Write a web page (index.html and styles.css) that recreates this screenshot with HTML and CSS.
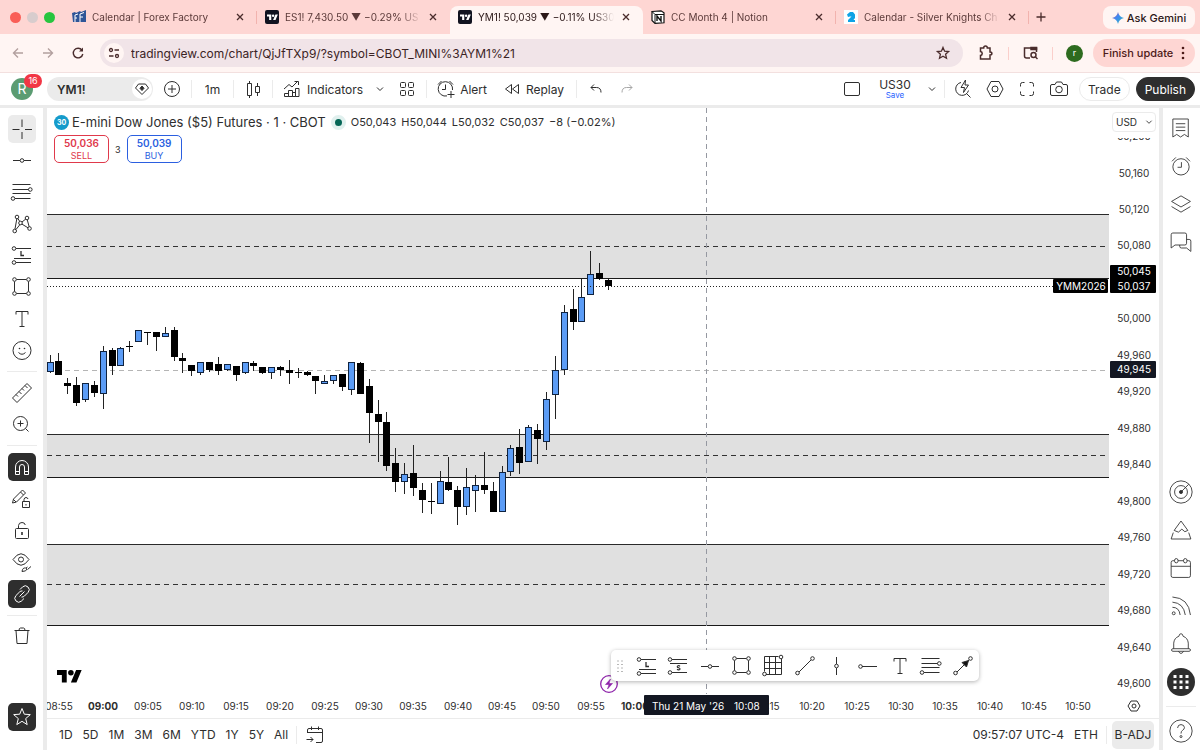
FILE: index.html
```html
<!DOCTYPE html>
<html lang="en">
<head>
    <meta charset="UTF-8">
    <meta name="viewport" content="width=device-width, initial-scale=1.0">
    <title>YM1! 50,039 ▼ −0.11% US30</title>
    <link rel="stylesheet" href="styles.css">
</head>
<body>
    <!-- icons used more than once -->
    <svg class="sprite" aria-hidden="true">
        <symbol id="i-close" viewBox="0 0 16 16"><path d="M5 5l6 6M11 5l-6 6"/></symbol>
        <symbol id="i-down" viewBox="0 0 16 16"><path d="M5 6.500l3 3 3-3"/></symbol>
        <symbol id="i-logo" viewBox="0 0 36 28"><path d="M14 22H7V11H0V4h14v18zM28 22h-8l7.500-18h8L28 22z"/><circle cx="20" cy="8" r="4"/></symbol>
        <symbol id="i-hline" viewBox="0 0 28 28"><path d="M5 14.500h7M16 14.500h7"/><circle cx="14" cy="14.500" r="1.800"/></symbol>
        <symbol id="i-fib" viewBox="0 0 28 28"><path d="M4.500 6.500h18M4.500 11.500h16M4.500 15.500h18M7 20.500h15.500"/><circle cx="22.300" cy="11.500" r="1.800"/><circle cx="5" cy="20.500" r="1.800"/></symbol>
        <symbol id="i-long" viewBox="0 0 28 28"><path d="M8 7.500h15M6 17.500h17M8 21.500h15"/><circle cx="6" cy="7.500" r="1.800"/><circle cx="6" cy="21.500" r="1.800"/><path d="M13 10v4.500h3" stroke-width="1.300"/></symbol>
        <symbol id="i-short" viewBox="0 0 28 28"><path d="M8 7.500h15M6 11.500h17M8 20.500h15"/><circle cx="6" cy="7.500" r="1.800"/><circle cx="6" cy="20.500" r="1.800"/><path d="M16 14.300c-1-1-3-.6-2.600.7.300.9 2.500.7 2.600 1.900 0 1.200-2.200 1.300-2.900.3" stroke-width="1.200"/></symbol>
        <symbol id="i-rect" viewBox="0 0 28 28"><path d="M8.500 6.500h10M8.500 20.500h10M6.500 8.500v10M20.500 8.500v10"/><circle cx="6.500" cy="6.500" r="1.800"/><circle cx="20.500" cy="6.500" r="1.800"/><circle cx="6.500" cy="20.500" r="1.800"/><circle cx="20.500" cy="20.500" r="1.800"/></symbol>
        <symbol id="i-text" viewBox="0 0 28 28"><path d="M8 9.500v-3h12v3M14 6.500v15M11.500 21.500h5"/></symbol>
        <symbol id="i-alarm" viewBox="0 0 28 28"><circle cx="14" cy="15" r="9.500"/><path d="M14.500 9.500v6H10M3.500 8.500L8 4M24.500 8.500L20 4"/></symbol>
    </svg>

    <div class="tab-strip">
        <div class="lights"><i class="red"></i><i class="grey"></i><i class="green"></i></div>
        <div class="tab divided">
            <svg class="favicon" viewBox="0 0 14 14"><path d="M0 3l3-1 1 1 4-2 1 1 5-2v12H1z" fill="#2f5597"/><path d="M3 5l3-1M3 5v7M3 8h2M8 4l4-1.500M8 4v8M8 7h3" stroke="#fff" stroke-width="1" fill="none"/></svg>
            <span class="tab-title">Calendar | Forex Factory</span>
            <button class="tab-close" aria-label="Close tab"><svg><use href="#i-close"/></svg></button>
        </div>
        <div class="tab">
            <span class="favicon tv"><svg><use href="#i-logo"/></svg></span>
            <span class="tab-title">ES1! 7,430.50 ▼ −0.29% US</span>
            <button class="tab-close" aria-label="Close tab"><svg><use href="#i-close"/></svg></button>
        </div>
        <div class="tab active">
            <span class="favicon tv"><svg><use href="#i-logo"/></svg></span>
            <span class="tab-title">YM1! 50,039 ▼ −0.11% US30</span>
            <button class="tab-close" aria-label="Close tab"><svg><use href="#i-close"/></svg></button>
        </div>
        <div class="tab divided">
            <svg class="favicon" viewBox="0 0 14 14"><path d="M1 1.500l9-.7 3 2v10l-9 .6-3-3z" fill="#fff" stroke="#111" stroke-width="1.200"/><path d="M4 4.500h9M4 4.500v8.500M1 1.500l3 3" stroke="#111"/><path d="M6 11V6l4 5V6" stroke="#111" stroke-width="1.400" fill="none"/></svg>
            <span class="tab-title">CC Month 4 | Notion</span>
            <button class="tab-close" aria-label="Close tab"><svg><use href="#i-close"/></svg></button>
        </div>
        <div class="tab divided">
            <svg class="favicon" viewBox="0 0 14 14"><rect width="14" height="14" fill="#fff"/><path d="M3 4.500L6 2h3l2 2.500V8L9.500 10H11v2H4v-2l3.500-3.500H6L4 7z" fill="#0fa3e6"/></svg>
            <span class="tab-title">Calendar - Silver Knights Ch</span>
            <button class="tab-close" aria-label="Close tab"><svg><use href="#i-close"/></svg></button>
        </div>
        <button class="new-tab" aria-label="New tab"><svg viewBox="0 0 16 16"><path d="M8 3.500v9M3.500 8h9"/></svg></button>
        <button class="gemini">
            <svg viewBox="0 0 12 12"><defs><linearGradient id="gem" x1="0" y1="0" x2="1" y2="1"><stop offset="0" stop-color="#ea4335"/><stop offset=".4" stop-color="#4285f4"/><stop offset=".7" stop-color="#34a0d4"/><stop offset="1" stop-color="#fbbc04"/></linearGradient></defs><path d="M6 0q1 5 6 6-5 1-6 6-1-5-6-6 5-1 6-6z" fill="url(#gem)"/></svg>
            Ask Gemini
        </button>
    </div>

    <div class="address-row">
        <button class="nav-btn dim" aria-label="Back"><svg viewBox="0 0 16 16"><path d="M13 8H3.500M8 3.500L3.500 8 8 12.500"/></svg></button>
        <button class="nav-btn dim" aria-label="Forward"><svg viewBox="0 0 16 16"><path d="M3 8h9.500M8 3.500L12.500 8 8 12.500"/></svg></button>
        <button class="nav-btn" aria-label="Reload"><svg viewBox="0 0 16 16"><path d="M12 5.200A4.800 4.800 0 1 0 12.800 9"/><path d="M13 2.500v4H9z" fill="#4a2c2c" stroke="none"/></svg></button>
        <div class="omnibox">
            <span class="site-info"><svg viewBox="0 0 16 16"><circle cx="5" cy="5" r="1.500"/><path d="M8.500 5H13M3 11h4.500"/><circle cx="11" cy="11" r="1.500"/></svg></span>
            <input class="url" type="text" aria-label="Address" value="tradingview.com/chart/QjJfTXp9/?symbol=CBOT_MINI%3AYM1%21">
            <svg class="bookmark" viewBox="0 0 16 16"><path d="M8 2.500l1.600 3.700 4 .4-3 2.700.9 3.900L8 11.200l-3.500 2 .9-3.900-3-2.700 4-.4z"/></svg>
        </div>
        <button class="ext-btn" aria-label="Extensions"><svg viewBox="0 0 18 18"><path d="M3.500 4h3.200c0-2.600 3.600-2.600 3.600 0H13v4c2.500 0 2.500 3 0 3v4H3.500v-3.500c2.300-.3 2.300-3.700 0-4z"/></svg></button>
        <button class="ext-btn lined" aria-label="Search tabs"><svg viewBox="0 0 18 18"><path d="M8 14H4.500Q2.500 14 2.500 12V4h12v4"/><path d="M9 3.500h5.500v2H9z" fill="#4a2c2c"/><circle cx="11.500" cy="11" r="2.500"/><path d="M13.500 13l2 2"/></svg></button>
        <span class="profile">r</span>
        <button class="finish">Finish update <svg viewBox="0 0 4 14"><circle cx="2" cy="2" r="1.300"/><circle cx="2" cy="7" r="1.300"/><circle cx="2" cy="12" r="1.300"/></svg></button>
    </div>

    <div class="chart-header">
        <div class="avatar">R<span class="badge">16</span></div>
        <button class="symbol">YM1!
            <span class="gem"><svg viewBox="0 0 20 20"><path d="M6.500 5h7L16.500 9 10 15.500 3.500 9z"/><path d="M10 7l2 2.300-2 2.300-2-2.300z" fill="#2e2e2e"/></svg></span>
        </button>
        <button class="icon-btn" aria-label="Compare"><svg viewBox="0 0 28 28"><circle cx="14" cy="14" r="7.500"/><path d="M14 10v8M10 14h8"/></svg></button>
        <i class="sep"></i>
        <button class="text-btn interval">1m</button>
        <i class="sep"></i>
        <button class="icon-btn" aria-label="Candles"><svg viewBox="0 0 28 28"><path d="M8.500 8.500h4v12h-4zM10.500 6v2.500M10.500 20.500V23M16.500 11.500h4v6h-4zM18.500 8v3.500M18.500 17.500V21"/></svg></button>
        <i class="sep"></i>
        <button class="text-btn indicators"><svg viewBox="0 0 28 28"><path d="M6.500 21.500v-3h4v3zM10.500 21.500v-6h4v6zM14.500 21.500v-4h3v4zM17.500 21.500v-8h3.500v8zM6 14l5-4.500 3 2.500 6-6M16.500 6.500h4V10"/></svg>Indicators</button>
        <button class="chevron" aria-label="Favorite indicators"><svg><use href="#i-down"/></svg></button>
        <button class="icon-btn" aria-label="Layouts"><svg viewBox="0 0 28 28"><rect x="7.500" y="7.500" width="5" height="5" rx="1"/><rect x="15.500" y="7.500" width="5" height="5" rx="1"/><rect x="7.500" y="15.500" width="5" height="5" rx="1"/><rect x="15.500" y="15.500" width="5" height="5" rx="1"/></svg></button>
        <i class="sep"></i>
        <button class="text-btn"><svg viewBox="0 0 28 28"><path d="M15 20.900A7.200 7.200 0 1 1 20.500 15M13.500 9.500v5H10M6 9.500l3.500-3.500M21 9.500L17.500 6M15.500 19.500h7M19 16v7"/></svg>Alert</button>
        <button class="text-btn replay"><svg viewBox="0 0 28 28"><path d="M13.500 9.500v9L7.500 14zM20.500 9.500v9L14.500 14z"/></svg>Replay</button>
        <i class="sep"></i>
        <button class="icon-btn" aria-label="Undo"><svg viewBox="0 0 28 28"><path d="M9 12.500h5.500q4.500 0 4.500 5M12 9.500l-3 3 3 3"/></svg></button>
        <button class="icon-btn redo" aria-label="Redo"><svg viewBox="0 0 28 28"><path d="M19 12.500h-5.500q-4.500 0-4.500 5M16 9.500l3 3-3 3"/></svg></button>
        <div class="header-right">
            <button class="icon-btn" aria-label="Layout setup"><svg viewBox="0 0 28 28"><rect x="6.500" y="7.500" width="15" height="13" rx="1.500"/></svg></button>
            <button class="layout-name">US30<span>Save</span></button>
            <button class="chevron" aria-label="Manage layouts"><svg><use href="#i-down"/></svg></button>
            <i class="sep"></i>
            <button class="icon-btn" aria-label="Quick search"><svg viewBox="0 0 28 28"><path d="M12 7.500a6.500 6.500 0 1 0 7.500 8M17.500 18.500l4 4M16.500 5l-4.500 7.500h3.500l-1 5 5-7.500H16z"/></svg></button>
            <button class="icon-btn" aria-label="Settings"><svg viewBox="0 0 28 28"><path d="M10 6.500h8l4 7.500-4 7.500h-8L6 14z"/><circle cx="14" cy="14" r="3"/></svg></button>
            <button class="icon-btn" aria-label="Fullscreen"><svg viewBox="0 0 28 28"><path d="M7.500 11.500v-2q0-2 2-2h2M16.500 7.500h2q2 0 2 2v2M20.500 16.500v2q0 2-2 2h-2M11.500 20.500h-2q-2 0-2-2v-2"/></svg></button>
            <button class="icon-btn" aria-label="Snapshot"><svg viewBox="0 0 28 28"><path d="M7 9.500h3l1.500-2.500h5L18 9.500h3q1.500 0 1.500 1.500v8q0 1.500-1.500 1.500H7q-1.500 0-1.500-1.500v-8q0-1.500 1.500-1.500z"/><circle cx="14" cy="14.500" r="3.300"/></svg></button>
            <button class="pill">Trade</button>
            <button class="pill dark">Publish</button>
        </div>
    </div>

    <div class="workspace">
        <div class="draw-bar">
            <div class="tools eight">
                <button class="tool selected" aria-label="Cross"><svg viewBox="0 0 28 28"><path d="M14 4.500V12M14 17v7M4.500 14.500h7M17 14.500h7"/></svg></button>
                <button class="tool" aria-label="Trend line"><svg><use href="#i-hline"/></svg></button>
                <button class="tool" aria-label="Fib retracement"><svg><use href="#i-fib"/></svg></button>
                <button class="tool" aria-label="Patterns"><svg viewBox="0 0 28 28"><path d="M8.800 8.800L7 19M8 19.500l4-5M11.500 11L9.800 8.500M14 12l3.800-3M19.300 10l1.900 6.800M13.800 14l6.500 4"/><circle cx="9" cy="7" r="1.800"/><circle cx="19" cy="8" r="1.800"/><circle cx="12.500" cy="13" r="1.800"/><circle cx="21.500" cy="18.500" r="1.800"/><circle cx="6.700" cy="21" r="1.800"/></svg></button>
                <button class="tool" aria-label="Long position"><svg><use href="#i-long"/></svg></button>
                <button class="tool" aria-label="Rectangle"><svg><use href="#i-rect"/></svg></button>
                <button class="tool" aria-label="Text"><svg><use href="#i-text"/></svg></button>
                <button class="tool" aria-label="Emoji"><svg viewBox="0 0 28 28"><circle cx="14" cy="14.500" r="9"/><path d="M10.500 16.500q3.500 3.500 7 0"/><circle cx="11.500" cy="12.500" r=".8" fill="#2e2e2e" stroke="none"/><circle cx="16.500" cy="12.500" r=".8" fill="#2e2e2e" stroke="none"/></svg></button>
            </div>
            <i class="rule"></i>
            <div class="tools two">
                <button class="tool" aria-label="Measure"><svg viewBox="0 0 28 28"><path d="M4.500 19L19 4.500l4.500 4.500L9 23.500zM8 15.500l2 2M11 12.500l2.500 2.500M14 9.500l2 2M17 6.500l2.500 2.500"/></svg></button>
                <button class="tool" aria-label="Zoom in"><svg viewBox="0 0 28 28"><circle cx="12.500" cy="13.500" r="7"/><path d="M12.500 10.500v6M9.500 13.500h6M17.500 18.500l3 3"/></svg></button>
            </div>
            <i class="rule"></i>
            <div class="tools five">
                <button class="tool on" aria-label="Magnet"><svg viewBox="0 0 28 28"><path d="M7.500 21.500V14a6.500 6.500 0 0 1 13 0v7.500h-4V14a2.500 2.500 0 0 0-5 0v7.500zM7.500 18.500h4M16.500 18.500h4"/></svg></button>
                <button class="tool" aria-label="Keep drawing"><svg viewBox="0 0 28 28"><path d="M4.500 18l1-4L14.500 5l3 3-9 9-4 1zM12.500 7l3 3M5.500 14.500l2.500 2.500M14.500 16.500h7v6h-7zM16 16.500v-2q.3-2 2-2 1.600 0 2 1.500M18 19v1.500"/></svg></button>
                <button class="tool" aria-label="Lock drawings"><svg viewBox="0 0 28 28"><rect x="7.500" y="12.500" width="13" height="10" rx="1"/><path d="M10.500 12.500V9.500q.3-3 3.500-3 2.800 0 3.300 2.500"/><path d="M14 16v3" stroke-width="1.600"/></svg></button>
                <button class="tool" aria-label="Hide drawings"><svg viewBox="0 0 28 28"><path d="M5 11.500q8-11.500 16 0-8 11.500-16 0z"/><circle cx="13" cy="11.500" r="2.500"/><path d="M14 23.500q.5-4 3.500-3.500l1.500 1q-.5 2.500-5 2.500zM18 20l1.500-1M19.500 21.500l3.500-3"/></svg></button>
                <button class="tool on" aria-label="Sync drawings"><svg viewBox="0 0 28 28"><path d="M12 9.500l2.700-2.700a3.900 3.900 0 0 1 5.500 5.500l-3.700 3.700a3.900 3.900 0 0 1-3 1.100M16 18.500l-2.700 2.700a3.900 3.900 0 0 1-5.500-5.500l3.700-3.700a3.900 3.900 0 0 1 3-1.100M11.500 16.500l5-5"/></svg></button>
            </div>
            <i class="rule"></i>
            <button class="tool" aria-label="Remove"><svg viewBox="0 0 28 28"><path d="M6.500 9.500h15M8 9.500l1 13h10l1-13M11 9.500q0-2.500 1.500-2.500h3Q17 7 17 9.500"/></svg></button>
            <button class="tool on favorite" aria-label="Show favorite tools"><svg viewBox="0 0 28 28"><path d="M14 5.500l2.300 5.700 6 .4-4.600 4 1.500 6-5.200-3.300-5.200 3.300 1.500-6-4.600-4 6-.4z"/></svg></button>
        </div>

        <div class="center">
            <div class="chart-pane">
                <svg class="chart" id="chart" role="img" aria-label="YM1! 1 minute chart"></svg>

                <div class="legend">
                    <div class="legend-row">
                        <span class="sym-logo">30</span>
                        <span class="sym-title">E-mini Dow Jones ($5) Futures · 1 · CBOT</span>
                        <i class="status"></i>
                        <span class="ohlc"><span>O50,043</span><span>H50,044</span><span>L50,032</span><span>C50,037</span><span>−8 (−0.02%)</span></span>
                    </div>
                    <div class="legend-row trade-row">
                        <button class="trade sell"><b>50,036</b>SELL</button>
                        <span class="spread">3</span>
                        <button class="trade buy"><b>50,039</b>BUY</button>
                    </div>
                </div>

                <div class="currency">
                    <select aria-label="Currency"><option>USD</option></select>
                    <svg><use href="#i-down"/></svg>
                </div>
                <svg class="watermark"><use href="#i-logo"/></svg>
                <svg class="event" viewBox="0 0 20 20"><circle cx="10" cy="10" r="8.300"/><path d="M11.500 5L6.500 10.500H10L8.500 15l5-5.500H10z" fill="#8e24aa" stroke-width=".6"/></svg>

                <div class="fav-bar">
                    <svg class="handle" viewBox="0 0 8 12"><path d="M1 1h2M5 1h2M1 4.500h2M5 4.500h2M1 8h2M5 8h2M1 11.500h2M5 11.500h2"/></svg>
                    <button class="tool" aria-label="Long position"><svg><use href="#i-long"/></svg></button>
                    <button class="tool" aria-label="Short position"><svg><use href="#i-short"/></svg></button>
                    <button class="tool" aria-label="Horizontal line"><svg><use href="#i-hline"/></svg></button>
                    <button class="tool" aria-label="Rectangle"><svg><use href="#i-rect"/></svg></button>
                    <button class="tool" aria-label="Gann box"><svg viewBox="0 0 28 28"><path d="M5.500 19.500v-15h14M7 22.500h15.500V7M5.500 10.500h17M5.500 16.500h17M10.500 4.500v18M16.500 4.500v18"/><circle cx="22" cy="5" r="1.800"/><circle cx="5.500" cy="22" r="1.800"/></svg></button>
                    <button class="tool" aria-label="Trend line"><svg viewBox="0 0 28 28"><path d="M8 20L20 8"/><circle cx="6.500" cy="21" r="1.800"/><circle cx="21.500" cy="6.500" r="1.800"/></svg></button>
                    <button class="tool" aria-label="Vertical line"><svg viewBox="0 0 28 28"><path d="M14.500 5v7M14.500 16v7"/><circle cx="14.500" cy="14" r="1.800"/></svg></button>
                    <button class="tool" aria-label="Horizontal ray"><svg viewBox="0 0 28 28"><path d="M8 14.500h15"/><circle cx="6.500" cy="14.500" r="1.800"/></svg></button>
                    <button class="tool" aria-label="Text"><svg><use href="#i-text"/></svg></button>
                    <button class="tool" aria-label="Fib retracement"><svg><use href="#i-fib"/></svg></button>
                    <button class="tool" aria-label="Arrow"><svg viewBox="0 0 28 28"><path d="M8 20l8-8M19 9l1-1"/><path d="M19.500 8.500l-2 6.500-4.500-4.500z" fill="#111"/><circle cx="6.500" cy="21" r="1.800"/><circle cx="21.500" cy="6.500" r="1.800"/></svg></button>
                </div>
            </div>

            <div class="bottom-bar">
                <button>1D</button><button>5D</button><button>1M</button><button>3M</button><button>6M</button><button>YTD</button><button>1Y</button><button>5Y</button><button>All</button>
                <i class="sep"></i>
                <button class="goto" aria-label="Go to date"><svg viewBox="0 0 28 28"><path d="M6.500 12V9q0-1.500 1.500-1.500h12q1.500 0 1.500 1.500v11q0 1.500-1.500 1.500h-5M6.500 11.500h15M10.500 5.500v3.500M17.500 5.500v3.500M5.500 18.500h6.500M9.500 16l2.500 2.500L9.500 21"/></svg></button>
                <button class="clock">09:57:07 UTC-4</button>
                <button>ETH</button>
                <i class="sep"></i>
                <button class="badj">B-ADJ</button>
            </div>
        </div>

        <div class="side-bar">
            <button aria-label="Watchlist"><svg viewBox="0 0 28 28"><path d="M4.500 3.500h18v21l-4.500-3-4.500 3-4.500-3-4.500 3zM8 9h11M8 13h11M8 17h11"/></svg></button>
            <button aria-label="Alerts"><svg><use href="#i-alarm"/></svg></button>
            <button aria-label="Object tree"><svg viewBox="0 0 28 28"><path d="M14 4.500l11 6.500-11 6.500L3 11zM3 17l11 6.500L25 17"/></svg></button>
            <button aria-label="Chats"><svg viewBox="0 0 28 28"><path d="M4.500 3.500h14q2 0 2 2v10q0 2-2 2H7L2.500 21V5.500q0-2 2-2zM12.500 17.500v1.500q0 2 2 2h6l5 4V13q0-2-2-2h-3"/></svg></button>
            <button class="push" aria-label="Screeners"><svg viewBox="0 0 28 28"><circle cx="14" cy="14" r="13"/><circle cx="14" cy="14" r="7.500"/><circle cx="14" cy="14" r="1.800" fill="#2e2e2e"/><path d="M14 14l9-9"/></svg></button>
            <button aria-label="Pine"><svg viewBox="0 0 28 28"><path d="M6 14.500L14 3.500l8 11-3.500 1.500-3.500-3-4 3.500zM5 17L2.500 24.500h23L23 17"/></svg></button>
            <button aria-label="Calendars"><svg viewBox="0 0 28 28"><rect x="2.500" y="5.500" width="22.500" height="19.500" rx="2"/><path d="M2.500 12h22.500"/><rect x="6.500" y="3" width="4" height="5" rx="2" fill="#fff"/><rect x="17" y="3" width="4" height="5" rx="2" fill="#fff"/></svg></button>
            <button aria-label="News"><svg viewBox="0 0 28 28"><circle cx="5.500" cy="22.500" r="1.700"/><path d="M4 15.500q8 0 9 9M4 9.500q13 1 15 15M4 3.500q19 1 21 21"/></svg></button>
            <button aria-label="Notifications"><svg viewBox="0 0 28 28"><path d="M5.500 19.500V13q.5-6 6-8 .5-3 2.500-3t2.500 3q5.500 2 6 8v6.500M4.500 19.500h19q1.500 0 1.500 1.500t-1.500 1.500h-19Q3 22.500 3 21t1.500-1.500zM11 22.500q3 5 6 0"/></svg></button>
            <button class="apps" aria-label="Products"><svg viewBox="0 0 28 28"><circle cx="14" cy="14" r="14" fill="#2e2e2e" stroke="none"/><path d="M6.500 8.500h3M12.500 8.500h3M18.500 8.500h3M6.500 14h3M12.500 14h3M18.500 14h3M6.500 19.500h3M12.500 19.500h3M18.500 19.500h3" stroke="#fff" stroke-width="3"/></svg></button>
            <i class="rule"></i>
            <button aria-label="Help"><svg viewBox="0 0 28 28"><circle cx="14" cy="14" r="13"/><path d="M10 10.500q.3-4 4-4 3.900.2 4 3.500 0 2-2.300 3.300-1.700 1-1.700 3.700"/><circle cx="14" cy="20.500" r="1.200"/></svg></button>
        </div>
    </div>

    <script src="script.js"></script>
</body>
</html>
```

FILE: styles.css
```css
* {
    box-sizing: border-box;
}

body {
    margin: 0;
    height: 100vh;
    display: flex;
    flex-direction: column;
    overflow: hidden;
    background: #ebebeb;
    color: #2e2e2e;
    font-family: Inter, "Liberation Sans", sans-serif;
    font-size: 12px;
}

button {
    border: 0;
    padding: 0;
    background: none;
    color: inherit;
    font: inherit;
    cursor: pointer;
    display: flex;
    align-items: center;
    justify-content: center;
    flex: none;
}

svg {
    display: block;
    flex: none;
    fill: none;
    stroke: #2e2e2e;
}

.sprite {
    position: absolute;
    width: 0;
    height: 0;
}

/* browser tabs */
.tab-strip {
    flex: none;
    height: 34px;
    display: flex;
    background: #fed6d3;
    padding-right: 5px;
    color: #5b3a39;
}

.lights {
    width: 64px;
    padding-left: 10px;
    display: flex;
    gap: 6px;
    align-items: center;
    flex: none;
}

.lights i {
    width: 11px;
    height: 11px;
    border-radius: 50%;
}

.red { background: #f95e57; }
.grey { background: #d8cccd; }
.green { background: #27c53f; }

.tab {
    flex: 0 1 193px;
    min-width: 0;
    display: flex;
    align-items: center;
    padding: 0 9px 0 8px;
    position: relative;
}

.tab.active {
    margin-top: 6px;
    padding-bottom: 6px;
    background: #fff5f3;
    border-radius: 8px 8px 0 0;
    color: #2b1717;
}

.tab.divided::after {
    content: "";
    position: absolute;
    right: 0;
    top: 11px;
    width: 1px;
    height: 13px;
    background: #f2b3ae;
}

.favicon {
    width: 14px;
    height: 14px;
    stroke: none;
    flex: none;
}

.favicon.tv {
    background: #111320;
    border-radius: 2px;
    display: flex;
    align-items: center;
    justify-content: center;
}

.favicon.tv svg {
    width: 11px;
    height: 9px;
    fill: #fff;
    stroke: none;
}

.tab-title {
    flex: 1;
    margin: 0 4px 0 6px;
    font-size: 10px;
    white-space: nowrap;
    overflow: hidden;
    mask-image: linear-gradient(to right, #000 85%, transparent);
}

.tab-close svg {
    width: 16px;
    height: 16px;
    stroke: #4a2c2c;
    stroke-width: 1.3;
}

.new-tab {
    margin-left: 4px;
}

.new-tab svg {
    width: 16px;
    height: 16px;
    stroke: #4a2c2c;
    stroke-width: 1.3;
}

.gemini {
    margin: 6px 0 5px auto;
    width: 92px;
    gap: 3px;
    background: #fff5f3;
    border-radius: 8px;
    font-size: 11px;
    font-weight: 500;
    color: #2b1717;
}

.gemini svg {
    width: 12px;
    height: 12px;
    stroke: none;
}

/* address row */
.address-row {
    flex: none;
    height: 39px;
    display: flex;
    align-items: center;
    padding: 0 5px 0 10px;
    background: #fff5f3;
    border-bottom: 1px solid #f3e0df;
}

.nav-btn {
    margin-right: 14px;
}

.nav-btn svg {
    width: 16px;
    height: 16px;
    stroke: #4a2c2c;
    stroke-width: 1.4;
}

.nav-btn.dim svg {
    stroke: #b3a09f;
}

.omnibox {
    flex: 1;
    min-width: 0;
    height: 28px;
    display: flex;
    align-items: center;
    padding: 0 12px 0 4px;
    background: #f1e4e8;
    border-radius: 14px;
}

.site-info {
    width: 20px;
    height: 20px;
    padding: 2px;
    border-radius: 50%;
    background: #fff5f3;
}

.site-info svg,
.bookmark {
    width: 16px;
    height: 16px;
    stroke: #4a2c2c;
    stroke-width: 1.3;
}

.url {
    flex: 1;
    border: 0;
    padding: 0 0 0 7px;
    background: none;
    font: inherit;
    font-size: 12px;
    color: #3b2324;
    outline: none;
}

.ext-btn {
    width: 45px;
    height: 13px;
}

.ext-btn.lined {
    border-left: 1px solid #fbcfcb;
    border-right: 1px solid #fbcfcb;
}

.ext-btn svg {
    width: 18px;
    height: 18px;
    stroke: #4a2c2c;
    stroke-width: 1.5;
}

.profile {
    width: 17px;
    height: 17px;
    margin: 0 10px 0 13px;
    border-radius: 50%;
    background: #2e6b1f;
    color: #fff;
    font-size: 9px;
    line-height: 16px;
    text-align: center;
}

.finish {
    width: 102px;
    height: 28px;
    gap: 8px;
    border-radius: 14px;
    background: #fed6d3;
    color: #4d1a18;
    font-size: 11px;
    font-weight: 500;
}

.finish svg {
    width: 4px;
    height: 14px;
    fill: #4d1a18;
    stroke: none;
}

/* chart header */
.chart-header {
    flex: none;
    height: 32px;
    margin-bottom: 3px;
    display: flex;
    align-items: center;
    background: #fff;
    padding: 0 5px 0 11px;
}

.avatar {
    width: 22px;
    height: 22px;
    margin-right: 14px;
    border-radius: 50%;
    background: #5b9c72;
    color: #fff;
    font-size: 14px;
    line-height: 22px;
    text-align: center;
    position: relative;
}

.badge {
    position: absolute;
    left: 13px;
    top: -4px;
    width: 18px;
    height: 14px;
    border-radius: 7px;
    background: #f23645;
    font-size: 9px;
    line-height: 14px;
}

.symbol {
    width: 106px;
    height: 24px;
    margin-right: 5px;
    padding: 0 1px 0 10px;
    justify-content: space-between;
    background: #ebebeb;
    border-radius: 12px;
    font-weight: 600;
}

.gem {
    background: #fff;
    border-radius: 50%;
}

.gem svg {
    width: 20px;
    height: 20px;
}

.icon-btn svg,
.text-btn svg {
    width: 28px;
    height: 28px;
}

.redo svg {
    stroke: #a6a6a6;
}

.sep {
    width: 1px;
    height: 18px;
    margin: 0 5px;
    background: #ebebeb;
    flex: none;
}

.interval {
    width: 31px;
}

.indicators svg {
    margin-right: 1px;
}

.chevron {
    margin: 0 5px 0 9px;
}

.chevron svg {
    width: 16px;
    height: 16px;
}

.replay {
    margin: 0 7px 0 11px;
}

.redo {
    margin-left: 3px;
}

.header-right {
    margin-left: auto;
    display: flex;
    align-items: center;
    gap: 4px;
}

.header-right .chevron,
.header-right .sep {
    margin: 0;
}

.layout-name {
    flex-direction: column;
    width: 50px;
    line-height: 13px;
}

.layout-name span {
    font-size: 8px;
    line-height: 9px;
    color: #2962ff;
}

.pill {
    height: 24px;
    padding: 0 8px;
    margin-left: 2px;
    border: 1px solid #ebebeb;
    border-radius: 12px;
}

.pill.dark {
    background: #2e2e2e;
    border-color: #2e2e2e;
    color: #fff;
}

/* workspace */
.workspace {
    flex: 1;
    min-height: 0;
    display: flex;
    gap: 4px;
}

.draw-bar {
    width: 43px;
    padding: 5px 0 19px;
    display: flex;
    flex-direction: column;
    align-items: center;
    background: #fff;
}

.tools {
    display: grid;
    grid-auto-rows: 1fr;
    align-items: center;
}

.eight { height: 253px; }
.two { height: 63px; }
.five { height: 159px; }

.tool {
    width: 28px;
    height: 28px;
    border-radius: 5px;
}

.tool svg {
    width: 28px;
    height: 28px;
}

.tool.selected {
    background: #ebebeb;
}

.tool.on {
    background: #2e2e2e;
}

.tool.on svg {
    stroke: #fff;
}

.rule {
    width: 30px;
    height: 1px;
    margin: 5px 0;
    background: #ebebeb;
    flex: none;
}

.favorite {
    margin-top: auto;
}

.center {
    flex: 1;
    min-width: 0;
    display: flex;
    flex-direction: column;
    background: #fff;
}

.chart-pane {
    flex: 1;
    min-height: 0;
    position: relative;
    border-bottom: 1px solid #ebebeb;
}

.chart {
    width: 100%;
    height: 100%;
    stroke: none;
    font-size: 10px;
}

.chart text {
    fill: #2e2e2e;
}

.chart .mid {
    text-anchor: middle;
}

.chart .strong {
    font-weight: 700;
}

.chart .light {
    fill: #fff;
}

.legend {
    position: absolute;
    left: 7px;
    top: 5px;
}

.legend-row {
    display: flex;
    align-items: center;
    height: 18px;
    white-space: nowrap;
}

.sym-logo {
    width: 15px;
    height: 15px;
    margin-right: 3px;
    border-radius: 50%;
    background: #159bcb;
    color: #fff;
    font-size: 7px;
    font-weight: 700;
    line-height: 15px;
    text-align: center;
}

.sym-title {
    font-size: 13px;
}

.status {
    width: 15px;
    height: 15px;
    margin: 0 5px;
    border: 4px solid #e0f0ee;
    border-radius: 50%;
    background: #056656;
}

.ohlc {
    display: flex;
    gap: 5px;
    font-size: 11px;
}

.trade-row {
    margin-top: 4px;
    height: 28px;
    gap: 6px;
}

.trade {
    width: 55px;
    height: 28px;
    flex-direction: column;
    border: 1px solid;
    border-radius: 5px;
    background: #fff;
    font-size: 9px;
    line-height: 11px;
}

.trade b {
    font-size: 10px;
    font-weight: 600;
    line-height: 13px;
}

.sell { color: #e0394b; }
.buy { color: #2b5fe0; }

.spread {
    font-size: 9px;
}

.currency {
    position: absolute;
    right: 3px;
    top: 4px;
    padding-bottom: 6px;
    background: #fff;
}

.currency select {
    display: block;
    appearance: none;
    width: 44px;
    height: 20px;
    padding: 0 3px;
    border: 1px solid #ebebeb;
    border-radius: 4px;
    background: #fff;
    color: inherit;
    font: inherit;
    font-size: 10px;
}

.currency svg {
    position: absolute;
    right: 0;
    top: 3px;
    width: 14px;
    height: 14px;
}

.watermark {
    position: absolute;
    left: 10px;
    bottom: 31px;
    width: 25px;
    height: 20px;
    fill: #000;
    stroke: none;
}

.event {
    position: absolute;
    left: 552px;
    bottom: 24px;
    width: 20px;
    height: 20px;
    stroke: #8e24aa;
    stroke-width: 1.3;
}

.fav-bar {
    position: absolute;
    left: 564px;
    bottom: 37px;
    width: 368px;
    height: 31px;
    display: flex;
    align-items: center;
    justify-content: space-between;
    padding: 0 2px 0 5px;
    background: #fff;
    border-radius: 5px;
    box-shadow: 0 1px 4px rgba(0, 0, 0, 0.3);
}

.handle {
    width: 8px;
    height: 12px;
    margin-right: 5px;
    stroke: #b8b8b8;
}

.bottom-bar {
    flex: none;
    height: 31px;
    display: flex;
    align-items: center;
    gap: 10px;
    padding: 0 5px 0 12px;
}

.bottom-bar .sep {
    margin: 0 0 0 -2px;
}

.goto svg {
    width: 28px;
    height: 28px;
}

.goto {
    margin-left: -6px;
}

.clock {
    margin-left: auto;
}

.badj {
    width: 42px;
    height: 28px;
    margin-left: -5px;
    border-radius: 5px;
    background: #ebebeb;
}

.side-bar {
    width: 37px;
    display: flex;
    flex-direction: column;
    align-items: center;
    padding: 1px 2px 0 0;
    background: #fff;
}

.side-bar button {
    height: 38px;
}

.side-bar svg {
    width: 24px;
    height: 24px;
}

.side-bar .apps svg {
    width: 28px;
    height: 28px;
}

.side-bar .push {
    margin-top: auto;
}

.side-bar .rule {
    margin: 5px 0;
}
```

FILE: script.js
```js
// [high, body top, body bottom, low, up] in chart units, one per minute from 08:54
const candles = [
    [355, 362, 372, 373, 1], [353, 361, 375, 375, 0], [378, 383, 386, 394, 0], [377, 385, 403, 406, 0],
    [383, 383, 400, 402, 1], [381, 385, 393, 397, 0], [346, 351, 394, 409, 1], [348, 350, 366, 375, 0],
    [347, 348, 366, 366, 1], [341, 346, 347, 352, 0], [330, 330, 342, 342, 1], [332, 332, 333, 345, 0],
    [332, 332, 337, 351, 0], [327, 333, 337, 337, 1], [327, 330, 357, 361, 0], [353, 358, 361, 373, 0],
    [365, 365, 371, 376, 0], [362, 362, 373, 375, 1], [362, 362, 370, 372, 0], [357, 364, 371, 375, 0],
    [364, 364, 370, 371, 1], [366, 366, 375, 381, 0], [362, 362, 373, 374, 1], [361, 363, 366, 371, 0],
    [367, 367, 373, 374, 0], [367, 367, 373, 379, 1], [366, 367, 370, 376, 0], [360, 370, 373, 384, 0],
    [368, 372, 373, 378, 0], [371, 372, 375, 376, 0], [376, 376, 381, 394, 0], [375, 381, 384, 384, 1],
    [375, 375, 381, 384, 1], [374, 374, 387, 391, 0], [362, 362, 390, 395, 1], [362, 363, 394, 394, 0],
    [379, 386, 413, 443, 0], [400, 414, 422, 462, 0], [412, 422, 466, 471, 0], [448, 463, 482, 492, 0],
    [463, 474, 482, 494, 1], [445, 473, 488, 496, 0], [483, 490, 500, 513, 0], [483, 501, 502, 514, 0],
    [471, 481, 504, 504, 1], [457, 482, 490, 491, 0], [486, 490, 507, 525, 0], [468, 487, 507, 515, 1],
    [475, 485, 491, 512, 1], [452, 485, 490, 494, 0], [482, 491, 512, 512, 0], [466, 472, 512, 512, 1],
    [445, 448, 472, 476, 1], [429, 447, 463, 474, 0], [425, 427, 462, 462, 1], [424, 430, 439, 464, 0],
    [392, 399, 442, 450, 1], [356, 370, 395, 419, 1], [305, 312, 370, 375, 1], [289, 309, 322, 330, 0],
    [279, 297, 322, 322, 1], [251, 274, 295, 295, 1], [263, 273, 279, 280, 0], [279, 280, 286, 290, 0]
];

// [top, middle, bottom]
const bands = [[214.5, 246.5, 278.5], [434.5, 455.5, 477.5], [544.5, 584.5, 625.5]];

const LEFT = 47;
const TOP = 108;
const STEP = 8.865;
const AXIS = 50;
const chart = document.getElementById('chart');

function line(x1, y1, x2, y2, color, dash) {
    return `<line x1="${x1}" y1="${y1}" x2="${x2}" y2="${y2}" stroke="${color}" stroke-dasharray="${dash || 'none'}"/>`;
}

function rect(x, y, w, h, fill, extra) {
    return `<rect x="${x}" y="${y}" width="${w}" height="${h}" fill="${fill}" ${extra || ''}/>`;
}

function label(x, y, text, cls) {
    return `<text x="${x}" y="${y}" class="${cls || ''}">${text}</text>`;
}

function priceY(price) {
    return 173.5 + (50160 - price) * 0.9116;
}

function draw() {
    const w = chart.clientWidth;
    const h = chart.clientHeight;
    const right = LEFT + w - AXIS;
    const bottom = TOP + h;
    chart.setAttribute('viewBox', `${LEFT} ${TOP} ${w} ${h}`);
    let out = '';

    bands.forEach(([top, mid, low]) => {
        out += rect(LEFT, top, right - LEFT, low - top, '#e0e0e0');
        out += line(LEFT, top, right, top, '#2a2a2a');
        out += line(LEFT, mid, right, mid, '#333', '5 4');
        out += line(LEFT, low, right, low, '#1a1a1a');
    });

    out += line(LEFT, 370.5, right, 370.5, '#b5b5b5', '5 4');
    out += line(706.5, TOP, 706.5, bottom - 24, '#9598a1', '5 4');

    candles.forEach(([high, top, low, foot, up], i) => {
        const x = Math.floor(50 + i * STEP);
        out += line(x + 0.5, high, x + 0.5, foot, '#222');
        if (up) {
            out += rect(x - 2.5, top + 0.5, 6, low - top - 1, '#5b9cf6', 'stroke="#10233f"');
        } else {
            out += rect(x - 3, top, 7, low - top, '#000');
        }
    });

    out += line(LEFT, 286.5, right, 286.5, '#222', '1 2');

    // price axis
    for (let p = 50200; p >= 49600; p -= 40) {
        if (p !== 50040) {
            out += label(right + 25, Math.round(priceY(p)) + 3, p.toLocaleString('en-US'), 'mid');
        }
    }
    out += rect(right + 1, 265, 46, 28, '#000', 'rx="1"');
    out += label(right + 25, 275, '50,045', 'mid light');
    out += label(right + 25, 290, '50,037', 'mid light');
    out += rect(right - 56, 279, 55, 14, '#000', 'rx="1"');
    out += label(right - 28, 290, 'YMM2026', 'mid light');
    out += rect(right + 1, 361, 46, 17, '#131722', 'rx="1"');
    out += label(right + 25, 373, '49,945', 'mid light');

    // time axis, the cursor time box hides 10:05 and 10:10
    for (let m = 1; m <= 116; m += 5) {
        const minutes = 534 + m;
        if (minutes === 605 || minutes === 610) {
            continue;
        }
        const text = String(Math.floor(minutes / 60)).padStart(2, '0') + ':' + String(minutes % 60).padStart(2, '0');
        out += label(Math.round(50 + m * STEP), bottom - 8, text, minutes % 60 ? 'mid' : 'mid strong');
    }
    out += rect(644, bottom - 23, 125, 20, '#131722', 'rx="1"');
    out += label(652, bottom - 8, "Thu 21 May '26", 'light');
    out += label(734, bottom - 8, '10:08', 'light');
    out += rect(right, bottom - 23, AXIS, 22, '#fff');
    out += `<g transform="translate(${right + 25} ${bottom - 12})" fill="none" stroke="#2e2e2e"><path d="M-3 -5h6l3 5-3 5h-6l-3-5z"/><circle r="2"/></g>`;

    chart.innerHTML = out;
}

draw();
window.addEventListener('resize', draw);
```
